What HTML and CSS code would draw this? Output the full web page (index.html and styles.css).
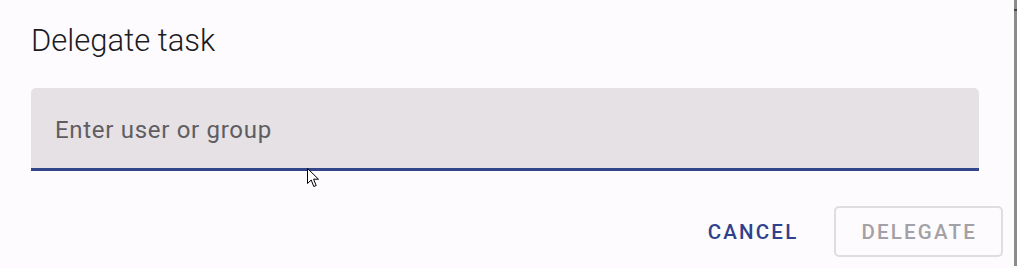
FILE: index.html
```html
<!DOCTYPE html>
<html lang="en">
<head>
    <meta charset="UTF-8">
    <title>Delegate task</title>
    <link rel="stylesheet" href="styles.css">
</head>
<body>
    <div class="page">
        <div class="dialog">
            <h1 class="dialog-title">Delegate task</h1>

            <div class="field">
                <span class="field-label">Enter user or group</span>
                <svg class="cursor" width="13" height="20" viewBox="0 0 13 20">
                    <path d="M0.5 0.5 L0.5 15.5 L4.2 12 L6.8 18.5 L9.2 17.5 L6.6 11.2 L11.5 11.2 Z" fill="#fff" stroke="#000" stroke-width="1" stroke-linejoin="round"/>
                </svg>
            </div>

            <div class="actions">
                <button class="btn btn-text">Cancel</button>
                <button class="btn btn-outlined" disabled>Delegate</button>
            </div>
        </div>
        <div class="edge"><span class="edge-mark"></span></div>
    </div>
</body>
</html>
```

FILE: styles.css
```css
body {
    margin: 0;
    background: #fdfbfe;
    font-family: Roboto, 'Noto Sans', Arial, sans-serif;
}
.page {
    display: flex;
    height: 268px;
}
.dialog {
    flex: 1;
    padding: 21px 11px 0 31px;
}
.dialog-title {
    margin: 0;
    font-size: 31px;
    line-height: 40px;
    font-weight: 300;
    color: #1c1b1f;
}
.field {
    position: relative;
    margin: 27px 24px 0 0;
    height: 80px;
    background: #e5e1e5;
    border-bottom: 3px solid #34468a;
    border-radius: 5px 5px 0 0;
    display: flex;
    align-items: center;
    padding: 0 24px;
}
.field-label {
    font-size: 24px;
    color: #5f5d62;
    letter-spacing: 0.7px;
    padding-top: 3px;
}
.cursor {
    position: absolute;
    left: 276px;
    top: 80px;
}
.actions {
    display: flex;
    justify-content: flex-end;
    align-items: center;
    gap: 12px;
    margin-top: 35px;
}
.btn {
    font-family: Roboto, Arial, sans-serif;
    font-size: 20.5px;
    font-weight: 500;
    letter-spacing: 2.2px;
    text-transform: uppercase;
    height: 51px;
    padding: 0 24px;
    border-radius: 5px;
    background: none;
    cursor: pointer;
}
.btn-text {
    border: none;
    color: #2f418a;
}
.btn-outlined {
    border: 2px solid #e0dde1;
    color: #a3a1a5;
    padding: 0 24px 0 25px;
}
.edge {
    width: 3px;
    background: #8b8b8b;
    margin-bottom: 2px;
}
.edge-mark {
    display: block;
    height: 2px;
    margin-top: 9px;
    background: #444;
}
```
